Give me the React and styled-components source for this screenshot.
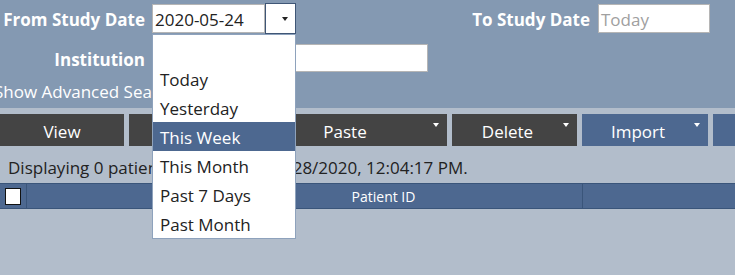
import React from 'react';
import styled, { createGlobalStyle } from 'styled-components';

const GlobalStyle = createGlobalStyle`
  html, body {
    margin: 0;
    padding: 0;
    overflow: hidden;
    background: #b2bdcb;
    font-family: 'Open Sans', 'Noto Sans', sans-serif;
  }
`;

const Page = styled.div`
  position: relative;
  width: 735px;
  height: 275px;
  overflow: hidden;
  background: #b2bdcb;
`;

const SearchPanel = styled.div`
  height: 108px;
  background: #8499b2;
  display: flex;
  flex-direction: column;
`;

const FieldRow = styled.div`
  display: flex;
  align-items: center;
  height: ${(p) => p.h}px;
  margin-top: ${(p) => p.mt || 0}px;
`;

const Label = styled.label`
  width: ${(p) => p.w || 145}px;
  text-align: right;
  color: #fff;
  font-weight: 700;
  font-size: 17px;
  padding-top: 2px;
  margin-right: ${(p) => p.gap || 7}px;
  white-space: nowrap;
`;

const TextBox = styled.div`
  box-sizing: border-box;
  width: ${(p) => p.w}px;
  height: ${(p) => p.h || 29}px;
  background: #fff;
  border: 1px solid #b5b5b5;
  padding: 1px 0 0 2px;
  font-size: 17px;
  line-height: 27px;
  white-space: nowrap;
  color: ${(p) => (p.placeholder ? '#a0a0a0' : '#222')};
`;

const DropButton = styled.div`
  box-sizing: border-box;
  width: 31px;
  height: 31px;
  background: #fff;
  border: 1px solid #3f5676;
  display: flex;
  align-items: center;
  justify-content: flex-end;
  padding-right: 7px;
`;

const Caret = styled.span`
  width: 0;
  height: 0;
  border-left: 3.5px solid transparent;
  border-right: 3.5px solid transparent;
  border-top: 4px solid ${(p) => p.color || '#222'};
`;

const Spacer = styled.div`
  flex: 1;
`;

const RightGap = styled.div`
  width: 25px;
`;

const AdvancedLink = styled.div`
  color: #fff;
  font-size: 17px;
  margin-left: -6px;
  margin-top: 8px;
  white-space: nowrap;
`;

const Toolbar = styled.div`
  display: flex;
  gap: 5px;
  margin-top: 6px;
  height: 32px;
`;

const ToolButton = styled.div`
  position: relative;
  box-sizing: border-box;
  flex: 0 0 ${(p) => p.w}px;
  height: 32px;
  background: ${(p) => (p.blue ? '#4d6890' : '#444444')};
  color: #fff;
  font-size: 17px;
  display: flex;
  align-items: center;
  justify-content: center;
  padding-top: 2px;
  padding-right: ${(p) => (p.menu ? 14 : 0)}px;
`;

const ButtonCaret = styled.span`
  position: absolute;
  right: 8px;
  top: 9px;
  width: 0;
  height: 0;
  border-left: 3.5px solid transparent;
  border-right: 3.5px solid transparent;
  border-top: 4px solid #fff;
`;

const Status = styled.div`
  height: 37px;
  display: flex;
  align-items: center;
  padding-left: 8px;
  padding-top: 5px;
  box-sizing: border-box;
  font-size: 17px;
  color: #222;
  white-space: nowrap;
`;

const GridHeader = styled.div`
  display: flex;
  height: 26px;
  box-sizing: border-box;
  background: #4d6890;
  border-top: 1px solid #3a557a;
  border-bottom: 1px solid #3a557a;
`;

const HeaderCell = styled.div`
  box-sizing: border-box;
  flex: ${(p) => (p.w ? `0 0 ${p.w}px` : '1')};
  border-right: ${(p) => (p.last ? 'none' : '1px solid #3a557a')};
  color: #fff;
  font-size: 14px;
  padding-top: 1px;
  display: flex;
  align-items: center;
  justify-content: center;
`;

const CheckBox = styled.div`
  box-sizing: border-box;
  width: 16px;
  height: 17px;
  background: #fff;
  border: 1px solid #111;
`;

const Menu = styled.ul`
  position: absolute;
  left: 152px;
  top: 34px;
  width: 144px;
  box-sizing: border-box;
  margin: 0;
  padding: 0;
  list-style: none;
  background: #fff;
  border: 1px solid #8ea2bc;
`;

const MenuItem = styled.li`
  height: 29px;
  line-height: 31px;
  padding-left: 7px;
  font-size: 17px;
  white-space: nowrap;
  color: ${(p) => (p.active ? '#fff' : '#222')};
  background: ${(p) => (p.active ? '#4d6890' : 'transparent')};
`;

const options = ['', 'Today', 'Yesterday', 'This Week', 'This Month', 'Past 7 Days', 'Past Month'];

const App = () => {
  return (
    <Page>
      <GlobalStyle />
      <SearchPanel>
        <FieldRow h={31} mt={3}>
          <Label>From Study Date</Label>
          <TextBox w={113}>2020-05-24</TextBox>
          <DropButton>
            <Caret />
          </DropButton>
          <Spacer />
          <Label w={180} gap={8}>To Study Date</Label>
          <TextBox w={112} placeholder>Today</TextBox>
          <RightGap />
        </FieldRow>
        <FieldRow h={28} mt={10}>
          <Label>Institution</Label>
          <TextBox w={276} h={28} />
        </FieldRow>
        <AdvancedLink>Show Advanced Search</AdvancedLink>
      </SearchPanel>
      <Toolbar>
        <ToolButton w={124}>View</ToolButton>
        <ToolButton w={123}>Copy</ToolButton>
        <ToolButton w={190} menu>
          Paste
          <ButtonCaret />
        </ToolButton>
        <ToolButton w={125} menu>
          Delete
          <ButtonCaret />
        </ToolButton>
        <ToolButton w={126} menu blue>
          Import
          <ButtonCaret />
        </ToolButton>
        <ToolButton w={120} blue>
          Export
        </ToolButton>
      </Toolbar>
      <Status>Displaying 0 patients. Last loaded 5/28/2020, 12:04:17 PM.</Status>
      <GridHeader>
        <HeaderCell w={27}>
          <CheckBox />
        </HeaderCell>
        <HeaderCell w={158} />
        <HeaderCell w={398}>Patient ID</HeaderCell>
        <HeaderCell last />
      </GridHeader>
      <Menu>
        {options.map((o, i) => (
          <MenuItem key={i} active={o === 'This Week'}>
            {o}
          </MenuItem>
        ))}
      </Menu>
    </Page>
  );
};

export default App;
